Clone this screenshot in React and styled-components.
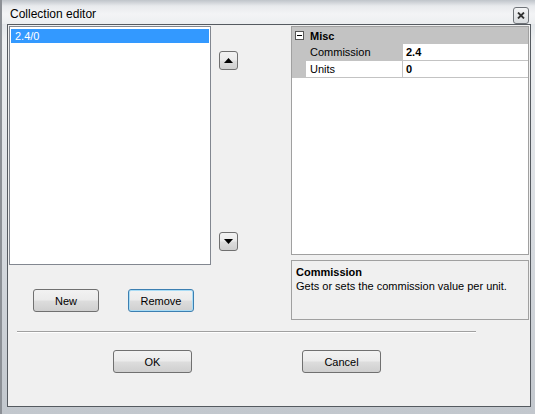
import React from 'react';
import styled, { createGlobalStyle, css } from 'styled-components';

const Global = createGlobalStyle`
  html, body { margin: 0; padding: 0; background: #ffffff; }
  body { font-family: "Liberation Sans", Arial, sans-serif; font-size: 11px; }
`;

const Window = styled.div`
  width: 535px;
  height: 414px;
  display: flex;
  flex-direction: column;
  box-sizing: border-box;
  background: linear-gradient(180deg, #b9bec5 0%, #dfe3e7 4%, #eef0f2 10%, #d5d9de 60%, #c2c7cd 100%);
  border-left: 2px solid #8c9096;
`;

const TitleBar = styled.div`
  height: 24px;
  display: flex;
  align-items: center;
  justify-content: space-between;
  padding: 0 6px 0 8px;
  background: linear-gradient(180deg, #bfc4ca 0px, #e8eaed 6px, #f3f4f6 14px, #eceef0 24px);
`;

const Title = styled.span`
  font-family: "Liberation Sans", Arial, sans-serif;
  font-size: 12px;
  color: #000;
  margin-top: 3px;
`;

const CloseBtn = styled.div`
  width: 14px;
  height: 15px;
  margin-top: 6px;
  border: 1px solid #6f7378;
  border-radius: 3px;
  background: linear-gradient(180deg, #f4f5f6, #d9dcdf);
  display: flex;
  align-items: center;
  justify-content: center;
`;

const FrameRow = styled.div`
  flex: 1;
  display: flex;
  padding: 0 4px 7px 5px;
`;

const Client = styled.div`
  flex: 1;
  display: flex;
  flex-direction: column;
  background: #f0f0f0;
  border: 1px solid #555a60;
  padding: 1px 0 0 1px;
`;

const TopRow = styled.div`
  display: flex;
  align-items: flex-start;
`;

const LeftCol = styled.div`
  width: 202px;
  display: flex;
  flex-direction: column;
`;

const ListBox = styled.div`
  height: 239px;
  box-sizing: border-box;
  border: 1px solid #828790;
  background: #fff;
  padding: 2px 1px;
`;

const ListItem = styled.div`
  height: 14px;
  line-height: 14px;
  padding-left: 4px;
  color: ${p => (p.$selected ? '#fff' : '#000')};
  background: ${p => (p.$selected ? '#3399ff' : 'transparent')};
`;

const ButtonRow = styled.div`
  display: flex;
  gap: ${p => p.$gap}px;
  margin-top: ${p => p.$top}px;
  padding-left: ${p => p.$left}px;
`;

const buttonFace = css`
  box-sizing: border-box;
  border: 1px solid #707070;
  border-radius: 3px;
  background: linear-gradient(180deg, #f2f2f2 0%, #ebebeb 48%, #dddddd 52%, #cfcfcf 100%);
`;

const PushButton = styled.div`
  ${buttonFace}
  width: ${p => p.$w}px;
  height: 23px;
  display: flex;
  align-items: center;
  justify-content: center;
  color: #000;
  font-size: 11px;
  ${p =>
    p.$focus &&
    css`
      border-color: #3c7fb1;
      box-shadow: inset 0 0 0 1px #a9dcf5;
    `}
`;

const ArrowCol = styled.div`
  width: 19px;
  margin-left: 8px;
  display: flex;
  flex-direction: column;
`;

const ArrowButton = styled.div`
  ${buttonFace}
  width: 19px;
  height: 19px;
  margin-top: ${p => p.$top}px;
  display: flex;
  align-items: center;
  justify-content: center;
`;

const RightCol = styled.div`
  width: 238px;
  margin-left: 53px;
  display: flex;
  flex-direction: column;
`;

const Grid = styled.div`
  height: 229px;
  box-sizing: border-box;
  border: 1px solid #a0a0a0;
  background: #fff;
`;

const CategoryRow = styled.div`
  height: 17px;
  display: flex;
  align-items: center;
  background: #c3c3c3;
  font-weight: bold;
`;

const Expander = styled.div`
  width: 7px;
  height: 7px;
  margin: 0 6px 0 3px;
  border: 1px solid #555;
  background: #fff;
  position: relative;
  &::after {
    content: '';
    position: absolute;
    left: 1px;
    right: 1px;
    top: 3px;
    height: 1px;
    background: #000;
  }
`;

const PropRow = styled.div`
  height: 17px;
  display: flex;
`;

const RowMargin = styled.div`
  width: 14px;
  background: #c3c3c3;
`;

const NameCell = styled.div`
  width: 97px;
  box-sizing: border-box;
  padding-left: 4px;
  line-height: 16px;
  border-bottom: 1px solid #c3c3c3;
  border-right: 1px solid #c3c3c3;
  background: ${p => (p.$selected ? '#c3c3c3' : '#fff')};
  color: #000;
`;

const ValueCell = styled.div`
  flex: 1;
  padding-left: 3px;
  line-height: 16px;
  font-weight: bold;
  border-bottom: 1px solid #c3c3c3;
`;

const Description = styled.div`
  height: 60px;
  margin-top: 5px;
  box-sizing: border-box;
  border: 1px solid #a0a0a0;
  padding: 4px 4px;
  line-height: 14px;
`;

const DescTitle = styled.div`
  font-weight: bold;
`;

const Separator = styled.div`
  width: 459px;
  height: 1px;
  margin: 11px 0 0 8px;
  background: #a0a0a0;
  border-bottom: 1px solid #fff;
`;

const Triangle = ({ down }) => (
  <svg width="9" height="5" viewBox="0 0 9 5">
    <polygon points={down ? '0,0 9,0 4.5,5' : '0,5 9,5 4.5,0'} fill="#000" />
  </svg>
);

const properties = [
  { name: 'Commission', value: '2.4', selected: true },
  { name: 'Units', value: '0' },
];

export default function App() {
  return (
    <>
      <Global />
      <Window>
        <TitleBar>
          <Title>Collection editor</Title>
          <CloseBtn>
            <svg width="8" height="7" viewBox="0 0 8 7">
              <path d="M1 0.5 L7 6.5 M7 0.5 L1 6.5" stroke="#333" strokeWidth="1.8" />
            </svg>
          </CloseBtn>
        </TitleBar>
        <FrameRow>
          <Client>
            <TopRow>
              <LeftCol>
                <ListBox>
                  <ListItem $selected>2.4/0</ListItem>
                </ListBox>
                <ButtonRow $top={24} $left={24} $gap={29}>
                  <PushButton $w={66}>New</PushButton>
                  <PushButton $w={66} $focus>Remove</PushButton>
                </ButtonRow>
              </LeftCol>
              <ArrowCol>
                <ArrowButton $top={25}>
                  <Triangle />
                </ArrowButton>
                <ArrowButton $top={162}>
                  <Triangle down />
                </ArrowButton>
              </ArrowCol>
              <RightCol>
                <Grid>
                  <CategoryRow>
                    <Expander />
                    Misc
                  </CategoryRow>
                  {properties.map(p => (
                    <PropRow key={p.name}>
                      <RowMargin />
                      <NameCell $selected={p.selected}>{p.name}</NameCell>
                      <ValueCell>{p.value}</ValueCell>
                    </PropRow>
                  ))}
                </Grid>
                <Description>
                  <DescTitle>Commission</DescTitle>
                  Gets or sets the commission value per unit.
                </Description>
              </RightCol>
            </TopRow>
            <Separator />
            <ButtonRow $top={17} $left={104} $gap={110}>
              <PushButton $w={79}>OK</PushButton>
              <PushButton $w={79}>Cancel</PushButton>
            </ButtonRow>
          </Client>
        </FrameRow>
      </Window>
    </>
  );
}
